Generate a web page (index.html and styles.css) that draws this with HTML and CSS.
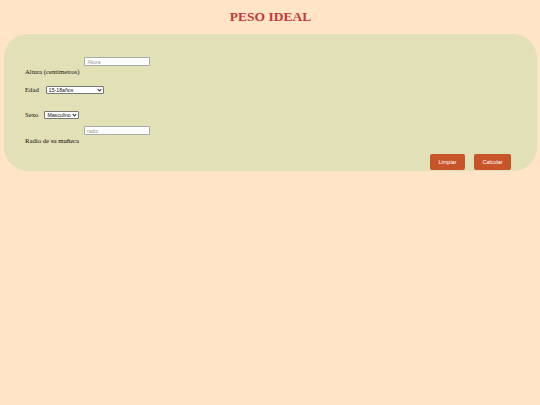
FILE: index.html
```html
<!DOCTYPE html>
<html lang="es">
<head>
<meta charset="utf-8">
<title>Peso ideal</title>
<link rel="stylesheet" href="styles.css">
</head>
<body>
<h1 class="title">PESO IDEAL</h1>
<form class="panel">
  <div class="row row-stack">
    <label class="label" for="altura">Altura (centímetros)</label>
    <input class="field" id="altura" type="text" placeholder="Altura">
  </div>
  <div class="row row-inline row-edad">
    <label class="label" for="edad">Edad</label>
    <span class="select-wrap select-edad">
      <select class="select" id="edad">
        <option>15-18años</option>
      </select>
    </span>
  </div>
  <div class="row row-inline row-sexo">
    <label class="label" for="sexo">Sexo</label>
    <span class="select-wrap select-sexo">
      <select class="select" id="sexo">
        <option>Masculino</option>
      </select>
    </span>
  </div>
  <div class="row row-stack row-radio">
    <label class="label" for="radio">Radio de su muñeca</label>
    <input class="field" id="radio" type="text" placeholder="radio">
  </div>
  <div class="actions">
    <button class="btn btn-limpiar" type="reset">Limpiar</button>
    <button class="btn btn-calcular" type="button">Calcular</button>
  </div>
</form>
</body>
</html>
```
FILE: styles.css
```css
html, body {
  margin: 0;
  padding: 0;
  background: #ffe4c8;
}
body {
  padding: 0 3px 0 4px;
  font-family: "Liberation Serif", "Times New Roman", serif;
  color: #111;
}
.title {
  margin: 0;
  padding-top: 9px;
  height: 34px;
  box-sizing: border-box;
  text-align: center;
  font-size: 13.5px;
  line-height: 16px;
  font-weight: bold;
  color: #c4383a;
}
.panel {
  margin: 0;
  background: #e2e0b6;
  border-radius: 24px;
  padding: 23px 26px 1px 21px;
  height: 137px;
  box-sizing: border-box;
  display: flex;
  flex-direction: column;
}
.row {
  display: flex;
}
.label {
  font-size: 6.7px;
  line-height: 8px;
}
.row-stack {
  align-items: flex-start;
  gap: 5px;
  height: 20px;
}
.row-stack .label {
  flex: 0 0 54px;
  white-space: nowrap;
  margin-top: 11px;
}
.field {
  box-sizing: border-box;
  width: 66px;
  height: 9px;
  margin: 0;
  padding: 0 2px;
  border: 1px solid #aaa;
  border-radius: 1px;
  background: #fff;
  font-family: "Liberation Sans", Arial, sans-serif;
  font-size: 5px;
  line-height: 7px;
  outline: none;
}
.field::placeholder {
  color: #9a9a9a;
}
.row-inline {
  align-items: center;
  height: 8px;
}
.row-edad {
  margin-top: 9px;
  gap: 7px;
}
.row-sexo {
  margin-top: 17px;
  gap: 6px;
}
.row-radio {
  margin-top: 7px;
}
.select-wrap {
  position: relative;
  display: block;
  height: 8px;
}
.select-wrap::after {
  content: "";
  position: absolute;
  right: 3px;
  top: 2px;
  width: 2px;
  height: 2px;
  border-right: 1px solid #222;
  border-bottom: 1px solid #222;
  transform: rotate(45deg);
  pointer-events: none;
}
.select {
  -webkit-appearance: none;
  appearance: none;
  box-sizing: border-box;
  display: block;
  width: 100%;
  height: 8px;
  margin: 0;
  padding: 0 0 0 2px;
  border: 1px solid #777;
  border-radius: 1px;
  background: #fff;
  font-family: "Liberation Sans", Arial, sans-serif;
  font-size: 5.2px;
  line-height: 6px;
  color: #111;
}
.select-edad {
  width: 58px;
}
.select-sexo {
  width: 35px;
}
.actions {
  margin-top: 8px;
  display: flex;
  justify-content: flex-end;
  gap: 9px;
}
.btn {
  box-sizing: border-box;
  height: 16px;
  padding: 0;
  border: none;
  border-radius: 2px;
  background: #c8552a;
  color: #fff;
  font-family: "Liberation Sans", Arial, sans-serif;
  font-size: 5.5px;
}
.btn-limpiar {
  width: 35px;
}
.btn-calcular {
  width: 37px;
}
```
